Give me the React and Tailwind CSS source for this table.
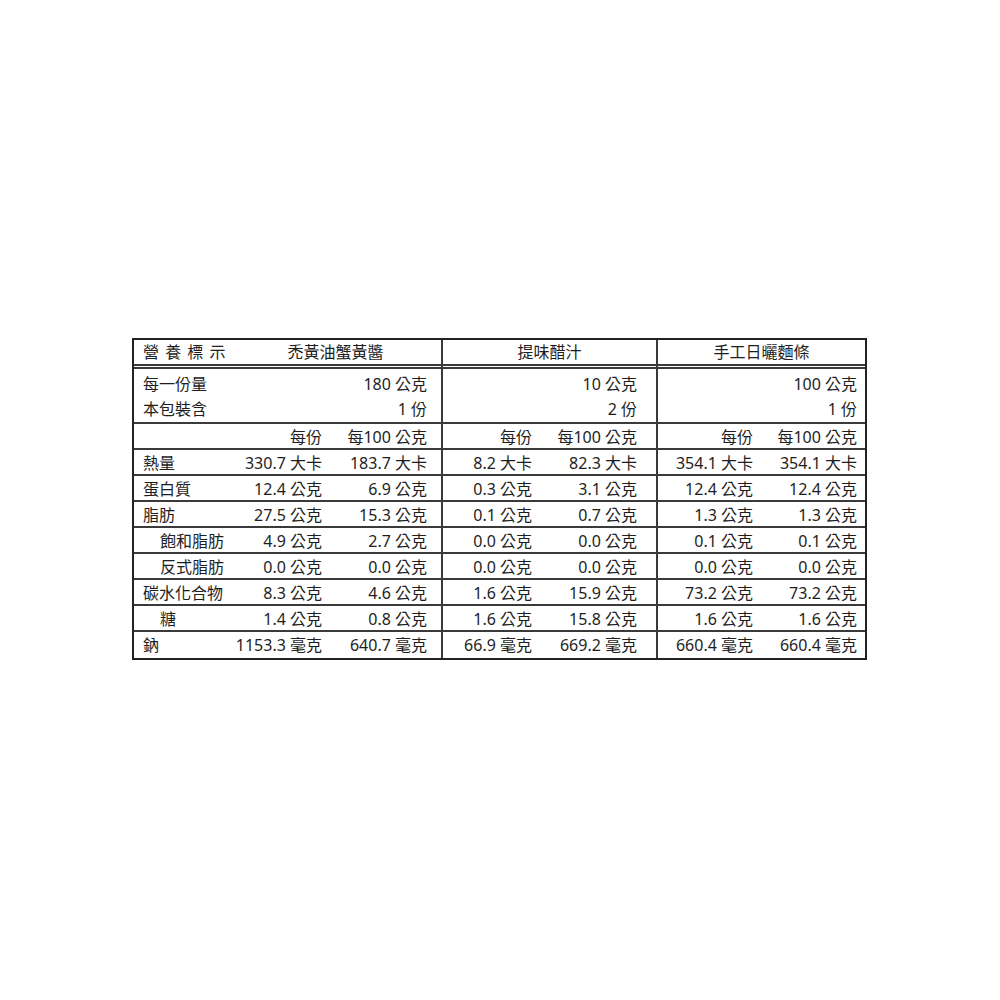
import React from "react";

const font = { fontFamily: '"Noto Sans", "Noto Sans CJK TC", sans-serif' };

const rows = [
  { label: "熱量", v: ["330.7 大卡", "183.7 大卡", "8.2 大卡", "82.3 大卡", "354.1 大卡", "354.1 大卡"] },
  { label: "蛋白質", v: ["12.4 公克", "6.9 公克", "0.3 公克", "3.1 公克", "12.4 公克", "12.4 公克"] },
  { label: "脂肪", v: ["27.5 公克", "15.3 公克", "0.1 公克", "0.7 公克", "1.3 公克", "1.3 公克"] },
  { label: "飽和脂肪", sub: true, v: ["4.9 公克", "2.7 公克", "0.0 公克", "0.0 公克", "0.1 公克", "0.1 公克"] },
  { label: "反式脂肪", sub: true, v: ["0.0 公克", "0.0 公克", "0.0 公克", "0.0 公克", "0.0 公克", "0.0 公克"] },
  { label: "碳水化合物", v: ["8.3 公克", "4.6 公克", "1.6 公克", "15.9 公克", "73.2 公克", "73.2 公克"] },
  { label: "糖", sub: true, v: ["1.4 公克", "0.8 公克", "1.6 公克", "15.8 公克", "1.6 公克", "1.6 公克"] },
  { label: "鈉", v: ["1153.3 毫克", "640.7 毫克", "66.9 毫克", "669.2 毫克", "660.4 毫克", "660.4 毫克"], last: true },
];

function Row({ label, sub, v, line = true }) {
  return (
    <div className={`flex h-[26px] leading-[26px] ${line ? "border-b-2 border-[#3a3a3a]" : ""}`}>
      <div className="grid w-[307px] grid-cols-[96px_92px_119px]">
        <div className={`whitespace-nowrap ${sub ? "pl-[26px]" : "pl-[9px]"}`}>{label}</div>
        <div className="text-right whitespace-nowrap">{v[0]}</div>
        <div className="pr-[14px] text-right whitespace-nowrap">{v[1]}</div>
      </div>
      <div className="grid w-[215px] grid-cols-[89px_124px] border-l-2 border-[#3a3a3a]">
        <div className="text-right whitespace-nowrap">{v[2]}</div>
        <div className="pr-[19px] text-right whitespace-nowrap">{v[3]}</div>
      </div>
      <div className="grid w-[209px] grid-cols-[95px_112px] border-l-2 border-[#3a3a3a]">
        <div className="text-right whitespace-nowrap">{v[4]}</div>
        <div className="pr-[8px] text-right whitespace-nowrap">{v[5]}</div>
      </div>
    </div>
  );
}

export default function App() {
  return (
    <div className="h-[1000px] w-[1000px] bg-white pl-[132px] pt-[338px]" style={font}>
      <div className="w-[735px] border-2 border-[#222] text-[16px] text-[#1e1e1e]">
        {/* header */}
        <div className="flex h-[26px] leading-[24px] border-b-2 border-[#3a3a3a]">
          <div className="grid w-[307px] grid-cols-[96px_211px]">
            <div className="pl-[9px] whitespace-nowrap tracking-[1px]">營 養 標 示</div>
            <div className="text-center whitespace-nowrap">禿黃油蟹黃醬</div>
          </div>
          <div className="w-[215px] border-l-2 border-[#3a3a3a] text-center">提味醋汁</div>
          <div className="w-[209px] border-l-2 border-[#3a3a3a] text-center">手工日曬麵條</div>
        </div>
        {/* double rule gap */}
        <div className="flex h-[3px] border-b-2 border-[#3a3a3a]">
          <div className="w-[307px]" />
          <div className="w-[215px] border-l-2 border-[#3a3a3a]" />
          <div className="w-[209px] border-l-2 border-[#3a3a3a]" />
        </div>
        <div className="flex h-[27px] leading-[24px]">
          <div className="flex w-[307px] items-end justify-between">
            <div className="pl-[9px]">每一份量</div>
            <div className="pr-[14px]">180 公克</div>
          </div>
          <div className="flex w-[215px] items-end justify-end border-l-2 border-[#3a3a3a] pr-[19px]">10 公克</div>
          <div className="flex w-[209px] items-end justify-end border-l-2 border-[#3a3a3a] pr-[8px]">100 公克</div>
        </div>
        <div className="flex h-[28px] leading-[27px] border-b-2 border-[#3a3a3a]">
          <div className="flex w-[307px] justify-between">
            <div className="pl-[9px]">本包裝含</div>
            <div className="pr-[14px]">1 份</div>
          </div>
          <div className="w-[215px] border-l-2 border-[#3a3a3a] pr-[19px] text-right">2 份</div>
          <div className="w-[209px] border-l-2 border-[#3a3a3a] pr-[8px] text-right">1 份</div>
        </div>
        <Row label="" v={["每份", "每100 公克", "每份", "每100 公克", "每份", "每100 公克"]} />
        {rows.map((r) => (
          <Row key={r.label} label={r.label} sub={r.sub} v={r.v} line={!r.last} />
        ))}
      </div>
    </div>
  );
}
